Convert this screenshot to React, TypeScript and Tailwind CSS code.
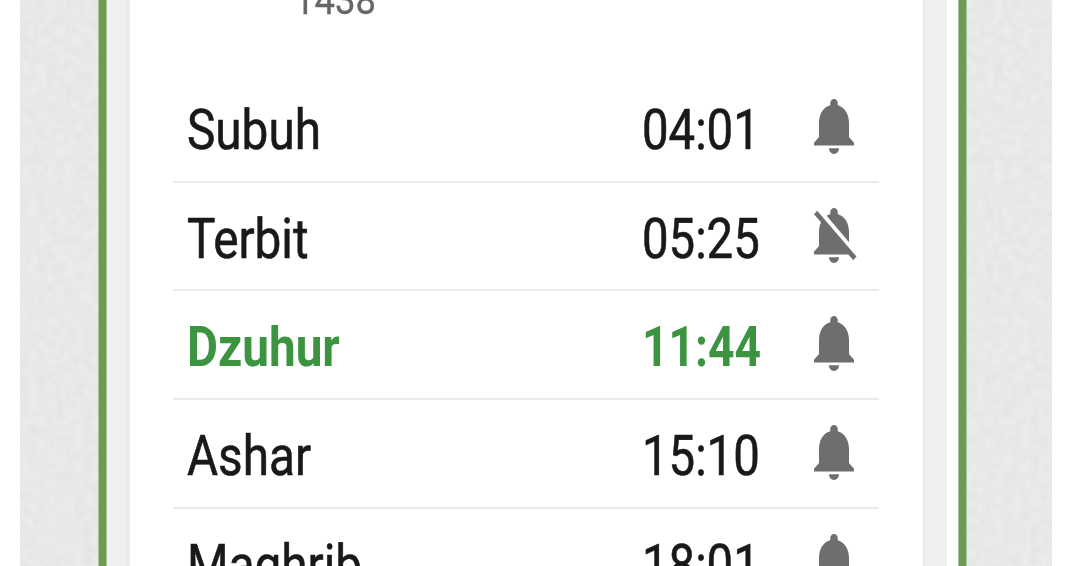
import { clsx } from 'clsx';

type Prayer = {
  name: string;
  time: string;
  muted?: boolean;
  active?: boolean;
};

const PRAYERS: Prayer[] = [
  { name: 'Subuh', time: '04:01' },
  { name: 'Terbit', time: '05:25', muted: true },
  { name: 'Dzuhur', time: '11:44', active: true },
  { name: 'Ashar', time: '15:10' },
  { name: 'Maghrib', time: '18:01' },
];

const BELL =
  'M12 22c1.1 0 2-.9 2-2h-4c0 1.1.89 2 2 2zm6-6v-5c0-3.07-1.64-5.64-4.5-6.32V4c0-.83-.67-1.5-1.5-1.5s-1.5.67-1.5 1.5v.68C7.63 5.36 6 7.92 6 11v5l-2 2v1h16v-1l-2-2z';
const BELL_OFF =
  'M20 18.69L7.84 6.14 5.27 3.49 4 4.76l2.8 2.8v.01c-.52.99-.8 2.16-.8 3.42v5l-2 2v1h13.73l2 2L21 19.72l-1-1.03zM12 22c1.11 0 2-.89 2-2h-4c0 1.11.89 2 2 2zm6-7.32V11c0-3.08-1.64-5.64-4.5-6.32V4c0-.83-.67-1.5-1.5-1.5s-1.5.67-1.5 1.5v.68c-.15.03-.29.08-.42.12-.1.03-.2.07-.3.11h-.01c-.01 0-.01 0-.02.01-.23.09-.46.2-.68.31 0 0-.01 0-.01.01L18 14.68z';

function Bell({ muted }: { muted?: boolean }) {
  return (
    <svg
      className="w-[43px] h-[55px] mb-[2px] flex-shrink-0"
      viewBox="4 2.5 17.2 19.5"
      preserveAspectRatio="none"
      fill="#6e6e6e"
      aria-hidden="true"
    >
      <path d={muted ? BELL_OFF : BELL} />
    </svg>
  );
}

// Paper-like grain on both sides of the phone frame
function Paper() {
  return (
    <svg className="w-full h-full" aria-hidden="true">
      <filter id="grain" colorInterpolationFilters="sRGB">
        <feTurbulence type="fractalNoise" baseFrequency="0.11" numOctaves="2" seed="4" />
        <feColorMatrix values="0.045 0 0 0 0.889  0.045 0 0 0 0.889  0.045 0 0 0 0.889  0 0 0 0 1" />
      </filter>
      <rect width="100%" height="100%" filter="url(#grain)" />
    </svg>
  );
}

export default function App() {
  return (
    <div className="flex w-[1080px] h-[566px] overflow-hidden bg-white pl-5 font-['Roboto',sans-serif]">
      <div className="w-[78px] bg-[#e9e9e9]">
        <Paper />
      </div>

      {/* Frame */}
      <div className="w-[9px] bg-[#6f9c55] border-x border-[#aac49a]" />
      <div className="w-[23px] bg-[#f0f0f0] border-r-[5px] border-[#ececec]" />

      {/* Schedule */}
      <main className="w-[793px] pl-[43px] pr-[44px] bg-white">
        <div className="h-[74px] overflow-hidden pl-[121px]">
          <div className="-mt-[24px] w-fit origin-left scale-x-[0.89] text-[41px] leading-[48px] text-[#666] [-webkit-text-stroke:0.3px_#666]">
            1438
          </div>
        </div>
        {PRAYERS.map(p => (
          <div
            key={p.name}
            className="flex items-center h-[108.7px] pl-[14px] pr-[22px] border-b-2 border-[#ebebeb]"
          >
            <div
              className={clsx(
                'flex-1 pt-[5px] text-[55px] leading-[64px]',
                p.active
                  ? 'font-bold text-[#3c9440]'
                  : 'text-[#191919] [-webkit-text-stroke:0.6px_#191919]',
              )}
            >
              <span className="inline-block origin-left scale-x-[0.867]">{p.name}</span>
            </div>
            <div
              className={clsx(
                'w-[172px] pt-[5px] text-[55px] leading-[64px]',
                p.active
                  ? 'font-bold text-[#3c9440]'
                  : 'text-[#191919] [-webkit-text-stroke:0.6px_#191919]',
              )}
            >
              <span
                className={clsx(
                  'inline-block origin-left',
                  p.active ? 'scale-x-[0.84]' : 'scale-x-[0.86]',
                )}
              >
                {p.time}
              </span>
            </div>
            <Bell muted={p.muted} />
          </div>
        ))}
      </main>

      <div className="w-[24px] bg-[#f0f0f0] border-l-2 border-[#e9e9e9]" />
      <div className="w-[11px] bg-white" />
      <div className="w-[9px] bg-[#6f9c55] border-x border-[#aac49a]" />
      <div className="w-[85px] bg-[#e9e9e9]">
        <Paper />
      </div>
    </div>
  );
}
